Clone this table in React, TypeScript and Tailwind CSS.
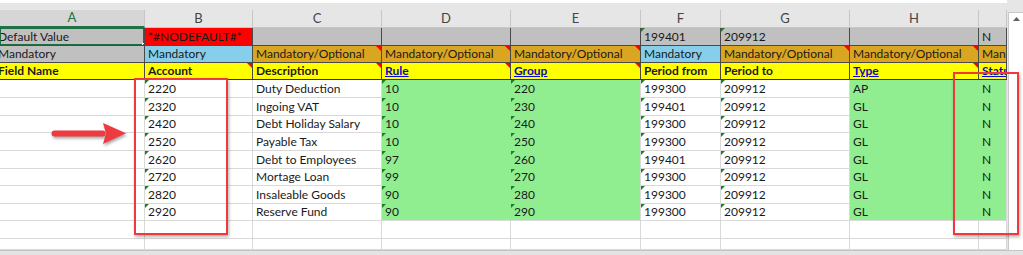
import React from 'react';

// column widths A..I (sheet is scrolled, A is cut on the left)
const widths = ['w-[145px]', 'w-[108px]', 'w-[129px]', 'w-[129px]', 'w-[130px]', 'w-[80px]', 'w-[129px]', 'w-[129px]', 'w-[28px]'];
// last column's letter sits off screen
const letters = ['A', 'B', 'C', 'D', 'E', 'F', 'G', 'H', ''];

type Cell = {
  t?: string;
  bg: string;
  br: string;
  bb: string;
  g?: boolean;
  r?: boolean;
  bold?: boolean;
  link?: boolean;
  sel?: boolean;
  cut?: boolean;
};

const GRAY = 'bg-[#c0c0c0]';
const BLUE = 'bg-[#87ceeb]';
const GOLD = 'bg-[#daa520]';
const YELLOW = 'bg-[#ffff00]';
const LIME = 'bg-[#90ee90]';
const WHITE = 'bg-white';

const dr = 'border-r-[#4a4a4a]';
const db = 'border-b-[#4a4a4a]';
const lr = 'border-r-[#d9d9d9]';
const lb = 'border-b-[#d9d9d9]';
const gr = 'border-r-[#90ee90]';
const gb = 'border-b-[#90ee90]';

const row1: Cell[] = [
  { t: 'Default Value', bg: GRAY, br: dr, bb: db, sel: true, cut: true },
  { t: '*#NODEFAULT#*', bg: 'bg-[#ff0000]', br: dr, bb: db },
  { bg: GRAY, br: dr, bb: db },
  { bg: GRAY, br: dr, bb: db },
  { bg: GRAY, br: dr, bb: db },
  { t: '199401', bg: GRAY, br: dr, bb: db, g: true },
  { t: '209912', bg: GRAY, br: dr, bb: db, g: true },
  { bg: GRAY, br: dr, bb: db },
  { t: 'N', bg: GRAY, br: dr, bb: db },
];

const row2: Cell[] = [
  { t: 'Mandatory', bg: GRAY, br: dr, bb: db, cut: true },
  { t: 'Mandatory', bg: BLUE, br: dr, bb: db },
  { t: 'Mandatory/Optional', bg: GOLD, br: dr, bb: db, r: true },
  { t: 'Mandatory/Optional', bg: GOLD, br: dr, bb: db, r: true },
  { t: 'Mandatory/Optional', bg: GOLD, br: dr, bb: db, r: true },
  { t: 'Mandatory', bg: BLUE, br: dr, bb: db },
  { t: 'Mandatory/Optional', bg: GOLD, br: dr, bb: db, r: true },
  { t: 'Mandatory/Optional', bg: GOLD, br: dr, bb: db, r: true },
  { t: 'Mandatory', bg: GOLD, br: dr, bb: db },
];

const db3 = 'border-b-[#3a3a10]';
const row3: Cell[] = [
  { t: 'Field Name', bg: YELLOW, br: dr, bb: db3, bold: true, cut: true },
  { t: 'Account', bg: YELLOW, br: dr, bb: db3, bold: true, r: true },
  { t: 'Description', bg: YELLOW, br: dr, bb: db3, bold: true, r: true },
  { t: 'Rule', bg: YELLOW, br: dr, bb: db3, link: true, r: true },
  { t: 'Group', bg: YELLOW, br: dr, bb: db3, link: true, r: true },
  { t: 'Period from', bg: YELLOW, br: dr, bb: db3, bold: true },
  { t: 'Period to', bg: YELLOW, br: dr, bb: db3, bold: true },
  { t: 'Type', bg: YELLOW, br: dr, bb: db3, link: true, r: true },
  { t: 'Status', bg: YELLOW, br: dr, bb: db3, link: true },
];

const accounts = [
  { acc: '2220', desc: 'Duty Deduction', rule: '10', group: '220', from: '199300', type: 'AP' },
  { acc: '2320', desc: 'Ingoing VAT', rule: '10', group: '230', from: '199401', type: 'GL' },
  { acc: '2420', desc: 'Debt Holiday Salary', rule: '10', group: '240', from: '199300', type: 'GL' },
  { acc: '2520', desc: 'Payable Tax', rule: '10', group: '250', from: '199300', type: 'GL' },
  { acc: '2620', desc: 'Debt to Employees', rule: '97', group: '260', from: '199401', type: 'GL' },
  { acc: '2720', desc: 'Mortage Loan', rule: '99', group: '270', from: '199300', type: 'GL' },
  { acc: '2820', desc: 'Insaleable Goods', rule: '90', group: '280', from: '199300', type: 'GL' },
  { acc: '2920', desc: 'Reserve Fund', rule: '90', group: '290', from: '199300', type: 'GL' },
];

const dataRows: Cell[][] = accounts.map((a, i) => {
  const last = i === accounts.length - 1;
  const gbb = last ? lb : gb;
  return [
    { bg: WHITE, br: lr, bb: lb },
    { t: a.acc, bg: WHITE, br: lr, bb: lb, g: true },
    { t: a.desc, bg: WHITE, br: lr, bb: lb },
    { t: a.rule, bg: LIME, br: gr, bb: gbb, g: true },
    { t: a.group, bg: LIME, br: lr, bb: gbb, g: true },
    { t: a.from, bg: WHITE, br: lr, bb: lb, g: true },
    { t: '209912', bg: WHITE, br: lr, bb: lb, g: true },
    { t: a.type, bg: LIME, br: gr, bb: gbb },
    { t: 'N', bg: LIME, br: lr, bb: gbb },
  ];
});

const blank: Cell[] = widths.map(() => ({ bg: WHITE, br: lr, bb: lb }));

const rowHeights = [
  'h-[18px]', 'h-[17px]', 'h-[17px]',
  'h-[18px]', 'h-[18px]', 'h-[17px]', 'h-[18px]', 'h-[18px]', 'h-[17px]', 'h-[18px]', 'h-[17px]',
  'h-[18px]', 'h-[11px]',
];

function SheetCell({ c, w }: { c: Cell; w: string }) {
  return (
    <div className={`relative ${w} h-full shrink-0 border-r border-b ${c.br} ${c.bb} ${c.bg} flex items-center overflow-hidden whitespace-nowrap ${c.cut ? 'pl-0' : 'pl-[3px]'}`}>
      {c.g && (
        <span className="absolute top-0 left-0 w-0 h-0 border-t-[4px] border-t-[#1e7a2c] border-r-[4px] border-r-transparent" />
      )}
      {c.r && (
        <span className="absolute top-0 right-0 w-0 h-0 border-t-[5px] border-t-[#ff0000] border-l-[5px] border-l-transparent" />
      )}
      {c.t && (
        <span
          className={`${c.cut ? '-ml-[2px]' : ''} ${c.bold || c.link ? 'font-bold' : ''} ${c.link ? 'text-[#0a0ac4] underline underline-offset-1' : 'text-[#1a1a1a]'}`}
        >
          {c.t}
        </span>
      )}
      {c.sel && (
        <>
          <span className="absolute -top-px -left-px -right-px -bottom-px border-2 border-[#1f6e43]" />
          <span className="absolute -bottom-[3px] -right-[3px] w-[5px] h-[5px] bg-[#1f6e43] border border-white" />
        </>
      )}
    </div>
  );
}

export default function App() {
  const rows = [row1, row2, row3, ...dataRows, blank, blank];
  return (
    <div className="relative w-[1023px] h-[255px] overflow-hidden bg-white font-[Lato,sans-serif] text-[12px]">
      <div className="flex h-[250px]">
        {/* grid */}
        <div className="w-[1007px] flex flex-col">
          <div className="h-[3px] bg-white" />
          <div className="h-[7px] bg-[#e6e6e6]" />
          <div className="flex h-[18px] bg-[#e6e6e6]">
            {letters.map((l, i) => (
              <div
                key={i}
                className={`${widths[i]} shrink-0 flex items-center justify-center border-r border-[#c6c6c6] text-[13px] ${
                  i === 0 ? 'bg-[#d6d6d6] text-[#217346] border-b-2 border-b-[#217346]' : 'text-[#444444] border-b border-b-[#c6c6c6]'
                }`}
              >
                {l}
              </div>
            ))}
          </div>
          {rows.map((row, ri) => (
            <div key={ri} className={`flex ${rowHeights[ri]}`}>
              {row.map((c, ci) => (
                <SheetCell key={ci} c={c} w={widths[ci]} />
              ))}
            </div>
          ))}
        </div>

        {/* vertical scrollbar */}
        <div className="w-[16px] flex flex-col bg-[#e6e6e6]">
          <div className="h-[12px]" />
          <div className="flex-1 ml-px bg-white border-l border-t border-[#c8c8c8] flex justify-center pt-[4px]">
            <svg width="7" height="4" viewBox="0 0 7 4">
              <path d="M0 4 L3.5 0 L7 4 Z" fill="#606060" />
            </svg>
          </div>
        </div>
      </div>
      <div className="h-[5px] bg-[#e3e3e3] border-t border-[#c4c4c4]" />

      {/* annotations */}
      <div className="absolute left-[134px] top-[78px] w-[94px] h-[157px] border-2 border-[#ec3a3f] shadow-[1px_2px_3px_rgba(0,0,0,0.3)]" />
      <div className="absolute left-[953px] top-[72px] w-[66px] h-[163px] border-2 border-[#ec3a3f] shadow-[1px_2px_3px_rgba(0,0,0,0.3)]" />
      <svg
        className="absolute left-[48px] top-[120px] drop-shadow-[1px_2px_1.5px_rgba(0,0,0,0.35)]"
        width="82"
        height="28"
        viewBox="0 0 82 28"
      >
        <rect x="3.5" y="10.5" width="54" height="6" rx="3" fill="#ee3b40" />
        <path d="M55 3 L78 13.3 L55 24 L58 13.5 Z" fill="#ee3b40" />
      </svg>
    </div>
  );
}
